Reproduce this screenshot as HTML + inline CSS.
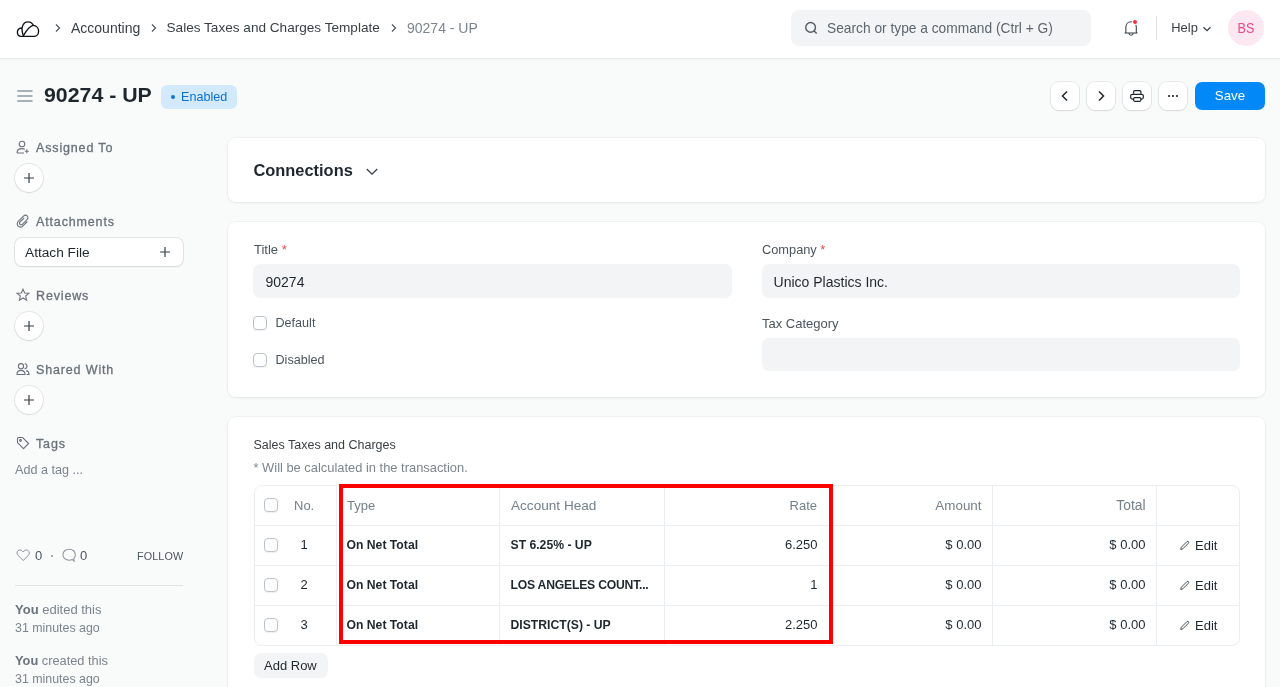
<!DOCTYPE html>
<html><head><meta charset="utf-8">
<style>
*{box-sizing:border-box;margin:0;padding:0}
html,body{width:1280px;height:687px;overflow:hidden}
.wrap{position:absolute;left:0;top:0;width:1280px;height:687px;will-change:transform}
body{background:#f9fafa;font-family:"Liberation Sans",sans-serif;color:#1f272e;position:relative}
.abs{position:absolute;white-space:nowrap}
.nav{position:absolute;left:0;top:0;width:1280px;height:59px;background:#fff;border-bottom:1px solid #e6e8ea;box-shadow:0 1px 3px rgba(0,0,0,0.035)}
.bc{font-size:14px;color:#383f45;line-height:16px}
.search{left:791px;top:10px;width:300px;height:36px;background:#f3f4f5;border-radius:8px}
.card{position:absolute;left:228px;width:1037px;background:#fff;border-radius:8px;box-shadow:0 0 0 1px rgba(0,0,0,0.035),0 1px 3px rgba(0,0,0,0.06)}
.sblabel{font-size:12.5px;font-weight:400;color:#687178;letter-spacing:0.85px;line-height:16px;-webkit-text-stroke:0.3px #687178}
.pluscirc{position:absolute;left:14.5px;width:28px;height:28px;border-radius:50%;background:#fff;box-shadow:0 0 0 1px rgba(0,0,0,0.08),0 1px 2px rgba(0,0,0,0.08)}
.btnsq{position:absolute;top:82px;width:28px;height:28px;background:#fff;border-radius:8px;box-shadow:0 0 0 1px rgba(0,0,0,0.07),0 1px 2px rgba(0,0,0,0.08)}
.lbl{font-size:13px;color:#4c555d;line-height:16px}
.inp{position:absolute;height:34px;background:#f3f4f5;border-radius:7px}
.chk{position:absolute;width:14px;height:14px;border:1px solid #bcc3cb;border-radius:4px;background:#fff;box-shadow:0 1px 1px rgba(0,0,0,0.06)}
.th{font-size:13px;color:#74808a;line-height:16px}
.td{font-size:13px;color:#1f272e;line-height:16px}
.tb{font-size:12.2px;font-weight:700;color:#1f272e;line-height:16px}
.hl{position:absolute;height:1px;background:#ebeef0}
.vl{position:absolute;width:1px;background:#ebeef0}
</style></head><body><div class="wrap">

<!-- NAVBAR -->
<div class="nav"></div>
<svg class="abs" style="left:12px;top:16px" width="32" height="26" viewBox="0 0 32 26" fill="none" stroke="#111417" stroke-width="1.35" stroke-linejoin="round" stroke-linecap="round">
  <path d="M11.4 19.8 C10.2 16.6 9.6 13.4 10.4 10.6 C11.2 7.6 13.4 5.8 16.2 5.8 C18.6 5.8 20.4 7.2 21.2 9.3 C24.3 9.5 26.6 12 26.6 15.2 C26.6 18.2 24.4 20.4 21.6 20.4 L9.2 20.4 C7 20.4 5.4 18.8 5.4 16.3 C5.4 14 7 12.2 9.6 12"/>
  <path d="M11.4 19.8 C13.6 16 16.2 10.6 21.2 9.3"/>
</svg>
<svg class="abs" style="left:54px;top:22px" width="8" height="12" viewBox="0 0 8 12" fill="none" stroke="#525a62" stroke-width="1.3"><path d="M2 2.5 L5.5 6 L2 9.5"/></svg>
<div class="abs bc" style="left:71px;top:19.5px">Accounting</div>
<svg class="abs" style="left:150px;top:22px" width="8" height="12" viewBox="0 0 8 12" fill="none" stroke="#525a62" stroke-width="1.3"><path d="M2 2.5 L5.5 6 L2 9.5"/></svg>
<div class="abs bc" style="left:166.5px;top:19.5px;font-size:13.6px">Sales Taxes and Charges Template</div>
<svg class="abs" style="left:390px;top:22px" width="8" height="12" viewBox="0 0 8 12" fill="none" stroke="#525a62" stroke-width="1.3"><path d="M2 2.5 L5.5 6 L2 9.5"/></svg>
<div class="abs bc" style="left:407px;top:19.5px;color:#7c858d">90274 - UP</div>

<div class="abs search"></div>
<svg class="abs" style="left:804px;top:20px" width="16" height="16" viewBox="0 0 16 16" fill="none" stroke="#525a62" stroke-width="1.4"><circle cx="6.6" cy="7.4" r="4.85"/><path d="M10.1 10.9 L12.7 13.5"/></svg>
<div class="abs bc" style="left:827px;top:20.8px;color:#5d666e;font-size:13.75px">Search or type a command (Ctrl + G)</div>

<svg class="abs" style="left:1122.8px;top:18.5px" width="16.2" height="18" viewBox="0 0 18 20" fill="none" stroke="#383f45" stroke-width="1.2">
  <path d="M3.2 15.2 L3.2 9 C3.2 5.6 5.6 3 9 3 C12.4 3 14.8 5.6 14.8 9 L14.8 15.2 M1.8 15.6 L16.2 15.6 M6.6 15.8 C6.8 17.4 7.8 18 9 18 C10.2 18 11.2 17.4 11.4 15.8"/>
</svg>
<div class="abs" style="left:1132.8px;top:19.6px;width:4.5px;height:4.5px;border-radius:50%;background:#f5333f;box-shadow:0 0 0 1px #fff"></div>
<div class="abs" style="left:1156px;top:16px;width:1px;height:24px;background:#e2e5e8"></div>
<div class="abs bc" style="left:1171.3px;top:20px;color:#383f45;font-size:12.9px">Help</div>
<svg class="abs" style="left:1201.6px;top:24.8px" width="10" height="8" viewBox="0 0 10 8" fill="none" stroke="#383f45" stroke-width="1.3"><path d="M1.5 2.2 L5 5.7 L8.5 2.2"/></svg>
<div class="abs" style="left:1228px;top:10px;width:36px;height:36px;border-radius:50%;background:#fde8f1"></div>
<div class="abs" style="left:1228px;top:20px;width:36px;text-align:center;font-size:14.3px;color:#f0468a;line-height:16px;transform:scaleX(0.88)">BS</div>

<!-- PAGE HEAD -->
<svg class="abs" style="left:17px;top:90px" width="16" height="14" viewBox="0 0 16 14" fill="none" stroke="#8f99a2" stroke-width="1.7"><path d="M0.3 1 H15.5 M0.3 6 H15.5 M0.3 11 H15.5"/></svg>
<div class="abs" style="left:43.5px;top:83px;font-size:21px;font-weight:700;transform:scaleX(1.015);transform-origin:0 0;color:#1f272e;line-height:24px">90274 - UP</div>
<div class="abs" style="left:161px;top:85px;width:76px;height:24px;border-radius:6px;background:#d3e9fc"></div>
<div class="abs" style="left:171px;top:95px;width:4px;height:4px;border-radius:50%;background:#0b78d6"></div>
<div class="abs" style="left:181px;top:89px;font-size:12.6px;color:#0b72d0;line-height:16px">Enabled</div>

<div class="btnsq" style="left:1051px"></div>
<svg class="abs" style="left:1057px;top:88px" width="16" height="16" viewBox="0 0 16 16" fill="none" stroke="#1f272e" stroke-width="1.5"><path d="M10 3.5 L5.5 8 L10 12.5"/></svg>
<div class="btnsq" style="left:1087px"></div>
<svg class="abs" style="left:1093px;top:88px" width="16" height="16" viewBox="0 0 16 16" fill="none" stroke="#1f272e" stroke-width="1.5"><path d="M6 3.5 L10.5 8 L6 12.5"/></svg>
<div class="btnsq" style="left:1123px"></div>
<svg class="abs" style="left:1129px;top:88px" width="16" height="16" viewBox="0 0 16 16" fill="none" stroke="#1f272e" stroke-width="1.2"><path d="M4.6 5.8 V3.7 C4.6 3 5.1 2.6 5.8 2.6 H10.7 C11.4 2.6 11.9 3 11.9 3.7 V5.8"/><path d="M4.6 11.1 H3.3 C2.4 11.1 1.7 10.4 1.7 9.6 V7.8 C1.7 6.9 2.4 6.3 3.3 6.3 H12.7 C13.6 6.3 14.3 6.9 14.3 7.8 V9.6 C14.3 10.4 13.6 11.1 12.7 11.1 H11.9"/><rect x="4.6" y="9.7" width="7.3" height="3.6" rx="1.2"/></svg>
<div class="btnsq" style="left:1159px"></div>
<svg class="abs" style="left:1165px;top:88px" width="16" height="16" viewBox="0 0 16 16" fill="#1f272e"><circle cx="4" cy="8" r="1.1"/><circle cx="8" cy="8" r="1.1"/><circle cx="12" cy="8" r="1.1"/></svg>
<div class="abs" style="left:1195px;top:82px;width:70px;height:28px;border-radius:7px;background:#0289f7"></div>
<div class="abs" style="left:1195px;top:88px;width:70px;text-align:center;font-size:13.3px;color:#fff;line-height:16px">Save</div>

<!-- SIDEBAR -->
<svg class="abs" style="left:16px;top:140px" width="14" height="14" viewBox="0 0 14 14" fill="none" stroke="#6b747c" stroke-width="1.1"><circle cx="6" cy="4" r="2.8"/><path d="M1 13 C1 10.2 3 8.6 6 8.6 C7.2 8.6 8 8.8 8.8 9.2 M1 13 H8 M10.8 9.2 V13.2 M8.8 11.2 H12.8"/></svg>
<div class="abs sblabel" style="left:36px;top:140px">Assigned To</div>
<div class="pluscirc" style="top:164px"></div>
<svg class="abs" style="left:22px;top:171px" width="14" height="14" viewBox="0 0 14 14" fill="none" stroke="#383f45" stroke-width="1.2"><path d="M7 2 V12 M2 7 H12"/></svg>

<svg class="abs" style="left:16px;top:214px" width="14" height="14" viewBox="0 0 14 14" fill="none" stroke="#6b747c" stroke-width="1.1"><path d="M8.2 3.8 L4 8 C3.2 8.8 3.2 9.8 4 10.4 C4.6 11 5.6 11 6.3 10.3 L11 5.6 C12.2 4.4 12.2 2.8 11.2 1.9 C10.2 1 8.6 1 7.5 2.1 L2.4 7.2 C0.9 8.7 0.9 11 2.2 12.2 C3.5 13.4 5.6 13.2 7 11.8 L11.3 7.5"/></svg>
<div class="abs sblabel" style="left:36px;top:214px">Attachments</div>
<div class="abs" style="left:14.5px;top:237.5px;width:168.5px;height:28.5px;background:#fff;border-radius:7px;box-shadow:0 0 0 1px rgba(0,0,0,0.09),0 1px 2px rgba(0,0,0,0.06)"></div>
<div class="abs" style="left:25px;top:245px;font-size:13.7px;color:#1f272e;line-height:16px">Attach File</div>
<svg class="abs" style="left:158px;top:245px" width="14" height="14" viewBox="0 0 14 14" fill="none" stroke="#383f45" stroke-width="1.2"><path d="M7 2 V12 M2 7 H12"/></svg>

<svg class="abs" style="left:16px;top:288px" width="14" height="14" viewBox="0 0 14 14" fill="none" stroke="#6b747c" stroke-width="1.1"><path d="M7 1.2 L8.7 5 L12.8 5.3 L9.7 8 L10.6 12.2 L7 10 L3.4 12.2 L4.3 8 L1.2 5.3 L5.3 5 Z"/></svg>
<div class="abs sblabel" style="left:36px;top:288px">Reviews</div>
<div class="pluscirc" style="top:311.5px"></div>
<svg class="abs" style="left:22px;top:319px" width="14" height="14" viewBox="0 0 14 14" fill="none" stroke="#383f45" stroke-width="1.2"><path d="M7 2 V12 M2 7 H12"/></svg>

<svg class="abs" style="left:16px;top:362px" width="14" height="14" viewBox="0 0 14 14" fill="none" stroke="#6b747c" stroke-width="1.1"><circle cx="5" cy="4.2" r="2.6"/><path d="M1 12.5 C1 9.8 2.6 8.4 5 8.4 C7.4 8.4 9 9.8 9 12.5 Z M8.6 1.8 C10 1.8 11 2.8 11 4.2 C11 5.6 10 6.6 8.6 6.6 M10.2 8.6 C12 9 13 10.4 13 12.5 H10.6"/></svg>
<div class="abs sblabel" style="left:36px;top:362px">Shared With</div>
<div class="pluscirc" style="top:385.5px"></div>
<svg class="abs" style="left:22px;top:393px" width="14" height="14" viewBox="0 0 14 14" fill="none" stroke="#383f45" stroke-width="1.2"><path d="M7 2 V12 M2 7 H12"/></svg>

<svg class="abs" style="left:16px;top:436px" width="14" height="14" viewBox="0 0 14 14" fill="none" stroke="#6b747c" stroke-width="1.1"><path d="M1.5 2.5 C1.5 2 2 1.5 2.5 1.5 H6.6 L12.6 7.5 L7.5 12.6 L1.5 6.6 Z"/><circle cx="4.5" cy="4.5" r="0.9"/></svg>
<div class="abs sblabel" style="left:36px;top:436px">Tags</div>
<div class="abs" style="left:15px;top:462px;font-size:12.6px;color:#7c858d;line-height:16px">Add a tag ...</div>

<svg class="abs" style="left:15.8px;top:549.2px" width="14.4" height="12.6" viewBox="0 0 16 14" fill="none" stroke="#8a939b" stroke-width="1.1"><path d="M8 12.8 L2.2 7 C0.8 5.6 0.8 3.4 2.2 2 C3.6 0.6 5.8 0.8 7 2.2 L8 3.2 L9 2.2 C10.2 0.8 12.4 0.6 13.8 2 C15.2 3.4 15.2 5.6 13.8 7 Z"/></svg>
<div class="abs" style="left:35px;top:548px;font-size:13px;color:#4c555d;line-height:16px">0</div>
<div class="abs" style="left:51px;top:555px;width:2px;height:2px;border-radius:50%;background:#8a939b"></div>
<svg class="abs" style="left:61.5px;top:547.6px" width="15" height="14.1" viewBox="0 0 16 15" fill="none" stroke="#8a939b" stroke-width="1.1"><path d="M11 12.3 C10 12.8 8.8 13 7.6 13 C3.8 13 1 10.4 1 7.1 C1 3.8 3.8 1.2 7.6 1.2 C11.4 1.2 14.2 3.8 14.2 7.1 C14.2 8.8 13.6 10.2 12.5 11.3 L12.9 13.9 Z"/></svg>
<div class="abs" style="left:80px;top:548px;font-size:13px;color:#4c555d;line-height:16px">0</div>
<div class="abs" style="left:137px;top:549px;font-size:10.8px;color:#4c555d;line-height:14px;letter-spacing:0.1px">FOLLOW</div>
<div class="abs" style="left:15px;top:585px;width:168px;height:1px;background:#e2e5e8"></div>

<div class="abs" style="left:15px;top:602px;font-size:13px;color:#7c858d;line-height:16px"><b style="color:#6b747c">You</b> edited this</div>
<div class="abs" style="left:15px;top:620px;font-size:12.4px;color:#7c858d;line-height:16px">31 minutes ago</div>
<div class="abs" style="left:15px;top:653px;font-size:12.8px;color:#7c858d;line-height:16px"><b style="color:#6b747c">You</b> created this</div>
<div class="abs" style="left:15px;top:671px;font-size:12.4px;color:#7c858d;line-height:16px">31 minutes ago</div>

<!-- CARD 1 -->
<div class="card" style="top:138px;height:64px"></div>
<div class="abs" style="left:253.5px;top:160px;font-size:16.4px;font-weight:700;color:#1f272e;line-height:20px">Connections</div>
<svg class="abs" style="left:365px;top:166px" width="14" height="12" viewBox="0 0 14 12" fill="none" stroke="#383f45" stroke-width="1.3"><path d="M1.8 3 L7 8.2 L12.2 3"/></svg>

<!-- CARD 2 -->
<div class="card" style="top:222px;height:175px"></div>
<div class="abs lbl" style="left:254px;top:242px">Title <span style="color:#e24c4c">*</span></div>
<div class="inp" style="left:253px;top:264px;width:479px"></div>
<div class="abs" style="left:265.5px;top:273.6px;font-size:14px;color:#1f272e;line-height:16px">90274</div>
<div class="chk" style="left:253px;top:316px"></div>
<div class="abs lbl" style="left:275.5px;top:315px;font-size:12.6px">Default</div>
<div class="chk" style="left:253px;top:353px"></div>
<div class="abs lbl" style="left:275.5px;top:352px;font-size:12.6px">Disabled</div>

<div class="abs lbl" style="left:762px;top:242px;font-size:12.8px">Company <span style="color:#e24c4c">*</span></div>
<div class="inp" style="left:762px;top:264px;width:478px"></div>
<div class="abs" style="left:773.6px;top:273.6px;font-size:14px;color:#1f272e;line-height:16px">Unico Plastics Inc.</div>
<div class="abs lbl" style="left:762px;top:316px">Tax Category</div>
<div class="inp" style="left:762px;top:338px;width:478px;height:33px"></div>

<!-- CARD 3 -->
<div class="card" style="top:417px;height:300px"></div>
<div class="abs" style="left:253.5px;top:437px;font-size:12.5px;color:#383f45;line-height:16px">Sales Taxes and Charges</div>
<div class="abs" style="left:253.5px;top:460px;font-size:12.9px;color:#7c858d;line-height:16px">* Will be calculated in the transaction.</div>

<div class="abs" style="left:253.5px;top:485px;width:986.5px;height:160.5px;border:1px solid #ebeef0;border-radius:8px;background:#fff"></div>
<div class="hl" style="left:254px;top:525px;width:985px"></div>
<div class="hl" style="left:254px;top:565px;width:985px"></div>
<div class="hl" style="left:254px;top:605px;width:985px"></div>
<div class="vl" style="left:335.5px;top:486px;height:159px"></div>
<div class="vl" style="left:499px;top:486px;height:159px"></div>
<div class="vl" style="left:664px;top:486px;height:159px"></div>
<div class="vl" style="left:828.5px;top:486px;height:159px"></div>
<div class="vl" style="left:992px;top:486px;height:159px"></div>
<div class="vl" style="left:1156px;top:486px;height:159px"></div>

<div class="chk" style="left:264px;top:498px"></div>
<div class="abs th" style="left:294px;top:498px">No.</div>
<div class="abs th" style="left:347px;top:498px">Type</div>
<div class="abs th" style="left:511px;top:498px;font-size:13.6px">Account Head</div>
<div class="abs th" style="left:664px;top:498px;width:153px;text-align:right">Rate</div>
<div class="abs th" style="left:829px;top:498px;width:152.5px;text-align:right;font-size:13.4px">Amount</div>
<div class="abs th" style="left:993px;top:498px;width:152.5px;text-align:right;font-size:13.8px">Total</div>

<div class="chk" style="left:264px;top:538px"></div>
<div class="abs td" style="left:294px;top:537px;width:20px;text-align:center">1</div>
<div class="abs tb" style="left:346.5px;top:537px">On Net Total</div>
<div class="abs tb" style="left:510.5px;top:537px">ST 6.25% - UP</div>
<div class="abs td" style="left:664px;top:537px;width:153.5px;text-align:right">6.250</div>
<div class="abs td" style="left:829px;top:537px;width:152.5px;text-align:right">$ 0.00</div>
<div class="abs td" style="left:993px;top:537px;width:152.5px;text-align:right">$ 0.00</div>

<div class="chk" style="left:264px;top:578px"></div>
<div class="abs td" style="left:294px;top:577px;width:20px;text-align:center">2</div>
<div class="abs tb" style="left:346.5px;top:577px">On Net Total</div>
<div class="abs tb" style="left:510.5px;top:577px;letter-spacing:-0.22px">LOS ANGELES COUNT...</div>
<div class="abs td" style="left:664px;top:577px;width:153.5px;text-align:right">1</div>
<div class="abs td" style="left:829px;top:577px;width:152.5px;text-align:right">$ 0.00</div>
<div class="abs td" style="left:993px;top:577px;width:152.5px;text-align:right">$ 0.00</div>

<div class="chk" style="left:264px;top:618px"></div>
<div class="abs td" style="left:294px;top:617px;width:20px;text-align:center">3</div>
<div class="abs tb" style="left:346.5px;top:617px">On Net Total</div>
<div class="abs tb" style="left:510.5px;top:617px">DISTRICT(S) - UP</div>
<div class="abs td" style="left:664px;top:617px;width:153.5px;text-align:right">2.250</div>
<div class="abs td" style="left:829px;top:617px;width:152.5px;text-align:right">$ 0.00</div>
<div class="abs td" style="left:993px;top:617px;width:152.5px;text-align:right">$ 0.00</div>

<svg class="abs" style="left:1179.3px;top:540.3px" width="11" height="11" viewBox="0 0 12 12" fill="none" stroke="#383f45" stroke-width="1"><path d="M2 10.5 L2.4 8 L8.6 1.8 C9.1 1.3 9.9 1.3 10.3 1.8 C10.8 2.2 10.8 3 10.3 3.5 L4.1 9.7 Z"/></svg>
<div class="abs td" style="left:1195px;top:538px">Edit</div>
<svg class="abs" style="left:1179.3px;top:580.3px" width="11" height="11" viewBox="0 0 12 12" fill="none" stroke="#383f45" stroke-width="1"><path d="M2 10.5 L2.4 8 L8.6 1.8 C9.1 1.3 9.9 1.3 10.3 1.8 C10.8 2.2 10.8 3 10.3 3.5 L4.1 9.7 Z"/></svg>
<div class="abs td" style="left:1195px;top:578px">Edit</div>
<svg class="abs" style="left:1179.3px;top:620.3px" width="11" height="11" viewBox="0 0 12 12" fill="none" stroke="#383f45" stroke-width="1"><path d="M2 10.5 L2.4 8 L8.6 1.8 C9.1 1.3 9.9 1.3 10.3 1.8 C10.8 2.2 10.8 3 10.3 3.5 L4.1 9.7 Z"/></svg>
<div class="abs td" style="left:1195px;top:618px">Edit</div>

<!-- red highlight -->
<div class="abs" style="left:339px;top:484px;width:494px;height:160px;border:4px solid #ff0000"></div>

<div class="abs" style="left:253.5px;top:653px;width:74.5px;height:24.5px;border-radius:7px;background:#f3f4f5"></div>
<div class="abs" style="left:264px;top:658px;font-size:13px;color:#1f272e;line-height:16px">Add Row</div>

</div></body></html>
